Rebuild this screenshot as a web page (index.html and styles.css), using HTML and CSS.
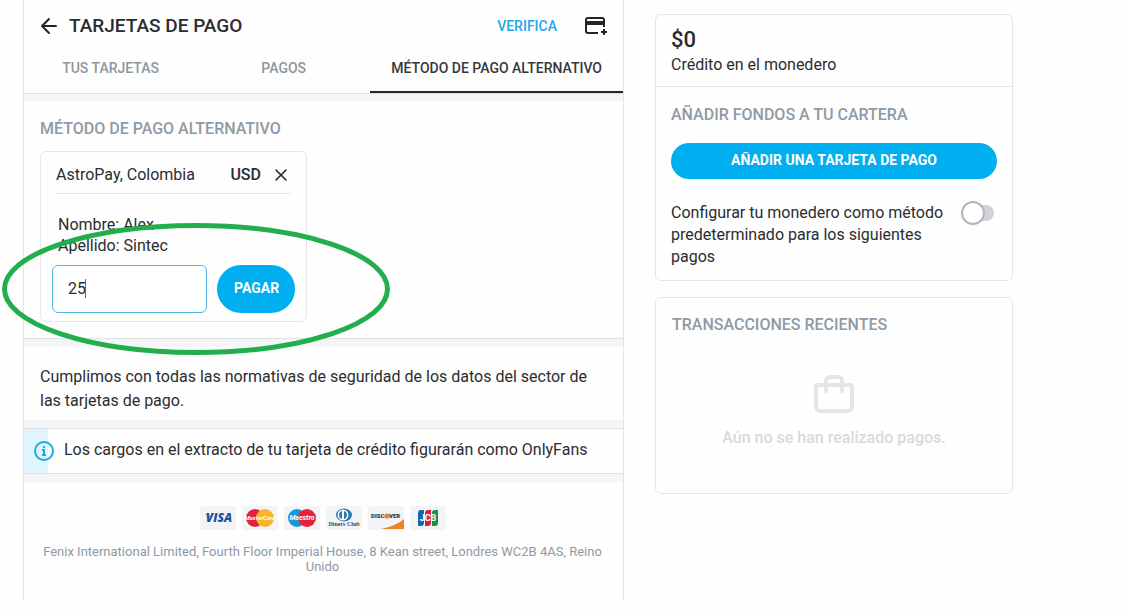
FILE: index.html
```html
<!DOCTYPE html>
<html lang="es">
<head>
    <meta charset="UTF-8">
    <meta name="viewport" content="width=device-width, initial-scale=1.0">
    <title>Tarjetas de pago</title>
    <link rel="stylesheet" href="styles.css">
</head>
<body>
    <div id="page">
        <main id="content">
            <header class="page-header">
                <button class="icon-button" aria-label="Volver">
                    <svg width="18" height="18" viewBox="0 0 18 18" fill="none" stroke="currentColor" stroke-width="2" stroke-linecap="round" stroke-linejoin="round">
                        <path d="M16 9H2M9 2L2 9l7 7"/>
                    </svg>
                </button>
                <h1>TARJETAS DE PAGO</h1>
                <a href="#" class="verify">VERIFICA</a>
                <button class="icon-button" aria-label="Añadir tarjeta">
                    <svg width="24" height="20" viewBox="0 0 24 20">
                        <path d="M14 17H4a2 2 0 0 1-2-2V4a2 2 0 0 1 2-2h14a2 2 0 0 1 2 2v7" fill="none" stroke="currentColor" stroke-width="2"/>
                        <path d="M2 5h18v4H2z" fill="currentColor"/>
                        <path d="M20 13v6M17 16h6" stroke="currentColor" stroke-width="2"/>
                    </svg>
                </button>
            </header>
            <nav class="tabs">
                <a href="#">TUS TARJETAS</a>
                <a href="#">PAGOS</a>
                <a href="#" class="active">MÉTODO DE PAGO ALTERNATIVO</a>
            </nav>

            <section class="methods">
                <h2>MÉTODO DE PAGO ALTERNATIVO</h2>
                <form class="method-card">
                    <div class="method-head">
                        <span>AstroPay, Colombia</span>
                        <span class="currency">USD</span>
                        <button type="button" class="icon-button" aria-label="Cerrar">
                            <svg width="12" height="12" viewBox="0 0 12 12" stroke="currentColor" stroke-width="1.600" stroke-linecap="round">
                                <path d="M1 1l10 10M11 1L1 11"/>
                            </svg>
                        </button>
                    </div>
                    <p class="holder">Nombre: Alex<br>Apellido: Sintec</p>
                    <div class="pay-row">
                        <div class="amount">
                            <input type="text" id="amount" value="25" aria-label="Importe">
                        </div>
                        <button type="button" class="primary">PAGAR</button>
                        <svg class="highlight" viewBox="0 0 388 132" fill="none">
                            <ellipse cx="194" cy="66" rx="191.500" ry="63.500" stroke="#22ae4c" stroke-width="5"/>
                        </svg>
                    </div>
                </form>
            </section>

            <p class="security">Cumplimos con todas las normativas de seguridad de los datos del sector de las tarjetas de pago.</p>

            <div class="notice">
                <svg class="notice-icon" width="20" height="20" viewBox="0 0 20 20" fill="none" stroke="currentColor">
                    <circle cx="10" cy="10" r="9" stroke-width="2"/>
                    <path d="M10 5v2" stroke-width="2"/>
                    <path d="M8 9h2v5M8 14h4" stroke-width="2"/>
                </svg>
                <p>Los cargos en el extracto de tu tarjeta de crédito figurarán como OnlyFans</p>
            </div>

            <footer>
                <div class="brands">
                    <svg viewBox="0 0 36 24" role="img" aria-label="Visa">
                        <path d="M5 8h4l2 5z" fill="#efa72d"/>
                        <text x="19" y="16" class="visa">VISA</text>
                    </svg>
                    <svg viewBox="0 0 36 24" role="img" aria-label="MasterCard">
                        <circle cx="13" cy="12" r="9" fill="#e4203a"/>
                        <circle cx="23" cy="12" r="9" fill="#f9b32f"/>
                        <text x="18" y="14" class="label-light">MasterCard</text>
                    </svg>
                    <svg viewBox="0 0 36 24" role="img" aria-label="Maestro">
                        <circle cx="13" cy="12" r="9" fill="#1698d8"/>
                        <circle cx="23" cy="12" r="9" fill="#e5233b"/>
                        <text x="18" y="14" class="label-light maestro">Maestro</text>
                    </svg>
                    <svg viewBox="0 0 36 24" role="img" aria-label="Diners Club">
                        <ellipse cx="18" cy="9" rx="8" ry="6.500" fill="#2878ae"/>
                        <circle cx="17" cy="9" r="5.500" fill="#fff"/>
                        <path d="M16 5a4.200 4.200 0 0 0 0 8zM18 5a4.200 4.200 0 0 1 0 8z" fill="#2878ae"/>
                        <text x="18" y="20" class="diners">Diners Club</text>
                    </svg>
                    <svg viewBox="0 0 36 24" role="img" aria-label="Discover">
                        <path d="M36 13v10H13q15-3 23-10z" fill="#ef8424"/>
                        <circle cx="19" cy="10" r="2.600" fill="#ef8424"/>
                        <text x="3" y="12" class="discover">DISC</text>
                        <text x="21" y="12" class="discover">VER</text>
                    </svg>
                    <svg viewBox="0 0 36 24" role="img" aria-label="JCB">
                        <path d="M11 4h3v13a3 3 0 0 1-3 3H8V7a3 3 0 0 1 3-3z" fill="#1765b1"/>
                        <path d="M18 4h3v13a3 3 0 0 1-3 3h-3V7a3 3 0 0 1 3-3z" fill="#d8213f"/>
                        <path d="M25 4h3v13a3 3 0 0 1-3 3h-3V7a3 3 0 0 1 3-3z" fill="#159447"/>
                        <text x="18" y="15" class="jcb">JCB</text>
                    </svg>
                </div>
                <p>Fenix International Limited, Fourth Floor Imperial House, 8 Kean street, Londres WC2B 4AS, Reino Unido</p>
            </footer>
        </main>

        <aside>
            <section class="panel">
                <div class="balance">
                    <strong>$0</strong>
                    <span>Crédito en el monedero</span>
                </div>
                <div class="wallet">
                    <h2>AÑADIR FONDOS A TU CARTERA</h2>
                    <button class="primary">AÑADIR UNA TARJETA DE PAGO</button>
                    <div class="switch-row">
                        <label for="default-wallet">Configurar tu monedero como método predeterminado para los siguientes pagos</label>
                        <input type="checkbox" id="default-wallet" class="switch">
                    </div>
                </div>
            </section>
            <section class="panel transactions">
                <h2>TRANSACCIONES RECIENTES</h2>
                <div class="empty">
                    <svg width="40" height="40" viewBox="0 0 40 40" fill="none" stroke="currentColor" stroke-width="4" stroke-linecap="round" stroke-linejoin="round">
                        <path d="M2 12h36v22a4 4 0 0 1-4 4H6a4 4 0 0 1-4-4z"/>
                        <path d="M12 18V8a4 4 0 0 1 4-4h8a4 4 0 0 1 4 4v10"/>
                    </svg>
                    <p>Aún no se han realizado pagos.</p>
                </div>
            </section>
        </aside>
    </div>
</body>
</html>
```

FILE: styles.css
```css
* {
    box-sizing: border-box;
}
body {
    font-family: Roboto, sans-serif;
    font-size: 16px;
    line-height: 22px;
    color: #2b2c30;
    background: #fefefe;
    margin: 0;
}
h1, h2, p {
    margin: 0;
}
h2 {
    font-size: 16px;
    font-weight: 500;
    color: #8f9aa5;
}
a {
    text-decoration: none;
}
button, input {
    font-family: inherit;
}
#page {
    display: grid;
    grid-template-columns: minmax(0, 1fr) 358px;
    gap: 31px;
    padding: 0 113px 14px 23px;
    min-height: 100vh;
}
#content {
    border-left: 1px solid #e2e4e6;
    border-right: 1px solid #e2e4e6;
}
.icon-button {
    display: flex;
    padding: 0;
    border: none;
    background: none;
    color: #242529;
    cursor: pointer;
}
.page-header {
    display: flex;
    align-items: center;
    height: 52px;
    padding: 0 15px 0 16px;
}
h1 {
    flex-grow: 1;
    margin-left: 11px;
    font-size: 19px;
    font-weight: 500;
}
.verify {
    margin-right: 27px;
    font-size: 14px;
    font-weight: 500;
    color: #1ea7ea;
}
.tabs {
    display: flex;
    height: 42px;
    border-bottom: 1px solid #dcdfe1;
}
.tabs a {
    flex: 1;
    padding: 5px 21px 0;
    font-size: 14px;
    font-weight: 500;
    text-align: center;
    white-space: nowrap;
    color: #8f959c;
}
.tabs a.active {
    color: #36383c;
    border-bottom: 2px solid #242529;
}
.methods {
    padding: 17px 16px 16px;
    border-top: 7px solid #f4f5f6;
    border-bottom: 1px solid #dfe2e4;
}
.method-card {
    width: 267px;
    margin-top: 11px;
    padding: 0 11px 8px;
    border: 1px solid #e5e7e9;
    border-radius: 6px;
}
.method-head {
    display: flex;
    align-items: center;
    height: 42px;
    margin: 0 4px;
    padding-top: 4px;
    padding-right: 4px;
    border-bottom: 1px solid #e2e4e6;
}
.currency {
    margin-left: auto;
    margin-right: 14px;
    font-weight: 500;
}
.holder {
    margin: 20px 6px 9px;
    line-height: 21px;
}
.pay-row {
    position: relative;
    display: flex;
    gap: 10px;
}
.amount {
    position: relative;
    width: 155px;
}
.amount input {
    width: 100%;
    height: 48px;
    padding: 0 15px 2px;
    font-size: 16px;
    color: #2b2c30;
    background: white;
    border: 1px solid #51b5df;
    border-radius: 6px;
    outline: none;
}
/* text cursor after the amount */
.amount::after {
    content: "";
    position: absolute;
    left: 33px;
    top: 14px;
    width: 1px;
    height: 19px;
    background: #1583c4;
}
button.primary {
    height: 36px;
    padding: 0 17px 2px;
    font-size: 14px;
    font-weight: 700;
    color: white;
    background: #00aff0;
    border: none;
    border-radius: 24px;
    cursor: pointer;
}
.pay-row button.primary {
    width: 78px;
    height: 48px;
}
.highlight {
    position: absolute;
    left: -50px;
    top: -42px;
    width: 388px;
    height: 132px;
    pointer-events: none;
}
.security {
    padding: 18px 16px 7px;
    border-top: 8px solid #f4f5f6;
    border-bottom: 8px solid #f4f5f6;
    line-height: 24px;
}
.notice {
    display: flex;
    align-items: center;
    height: 46px;
    padding-left: 10px;
    border-top: 1px solid #dfe2e4;
    border-bottom: 1px solid #dfe2e4;
    background: linear-gradient(to right, #e0f4fe 24px, transparent 24px);
}
.notice p {
    margin-left: 10px;
    padding-bottom: 2px;
}
.notice-icon {
    flex-shrink: 0;
    color: #17ace4;
}
footer {
    padding: 24px 17px 24px 15px;
    border-top: 8px solid #f4f5f6;
    font-size: 13px;
    line-height: 15px;
    text-align: center;
    color: #8f9aa5;
}
.brands {
    display: flex;
    justify-content: center;
    gap: 6px;
    margin-bottom: 14px;
}
.brands svg {
    width: 36px;
    height: 24px;
    background: #f2f4f5;
    border-radius: 2px;
}
.brands text {
    text-anchor: middle;
    font-weight: 700;
}
.brands .visa {
    font-family: "Open Sans", sans-serif;
    font-size: 12px;
    font-style: italic;
    font-weight: 800;
    fill: #17539b;
}
.brands .label-light {
    font-size: 6px;
    font-style: italic;
    fill: white;
}
.brands .maestro {
    font-size: 7px;
}
.brands .diners {
    font-family: "Liberation Serif", serif;
    font-size: 6px;
    fill: #404854;
}
.brands .discover {
    font-size: 6px;
    font-weight: 900;
    text-anchor: start;
    fill: #333;
}
.brands .jcb {
    font-size: 9px;
    fill: white;
}
aside {
    padding-top: 14px;
}
.panel {
    margin-bottom: 16px;
    border: 1px solid #e4e6e8;
    border-radius: 6px;
}
.balance {
    display: flex;
    flex-direction: column;
    padding: 12px 15px 10px;
    border-bottom: 1px solid #e2e4e6;
}
.balance strong {
    font-size: 22px;
    font-weight: 500;
    line-height: 26px;
    margin-bottom: 1px;
}
.wallet {
    padding: 17px 15px 12px;
}
.wallet .primary {
    width: 100%;
    margin: 17px 0 23px;
}
.switch-row {
    display: flex;
    align-items: flex-start;
    justify-content: space-between;
}
.switch-row label {
    width: 276px;
}
.switch {
    appearance: none;
    display: flex;
    align-items: center;
    width: 32px;
    height: 16px;
    margin: 3px 3px 0 0;
    background: #d1d3db;
    border-radius: 8px;
    cursor: pointer;
}
.switch::before {
    content: "";
    flex-shrink: 0;
    width: 20px;
    height: 20px;
    margin-left: -1px;
    background: white;
    border: 2px solid #b2b5bd;
    border-radius: 50%;
}
.transactions {
    padding: 16px 16px 44px;
}
.empty {
    display: flex;
    flex-direction: column;
    align-items: center;
    padding-top: 37px;
    font-weight: 500;
    color: #d8dadc;
}
.empty svg {
    margin-bottom: 14px;
    color: #e4e5e7;
}
```
